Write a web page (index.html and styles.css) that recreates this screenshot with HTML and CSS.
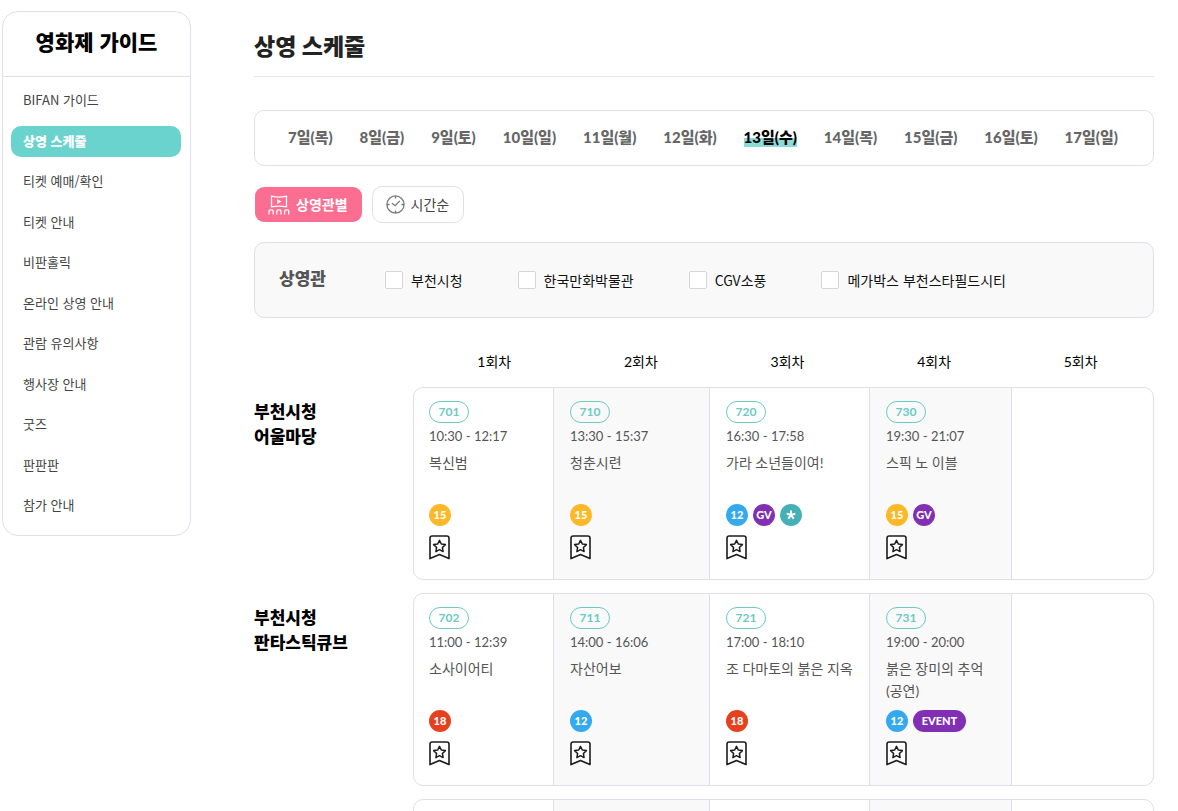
FILE: index.html
```html
<!DOCTYPE html>
<html lang="ko">
<head>
<meta charset="UTF-8">
<meta name="viewport" content="width=device-width, initial-scale=1.0">
<title>상영 스케줄</title>
<link rel="stylesheet" href="styles.css">
</head>
<body>
<svg class="sprite" aria-hidden="true">
  <symbol id="bookmark" viewBox="0 0 21 25">
    <path d="M1 23.6V3.2Q1 1 3.2 1h14.6Q20 1 20 3.2v20.4L10.500 19.600Z" fill="#fff" stroke="#1c1c1c" stroke-width="1.600" stroke-linejoin="round"/>
    <path d="M10.500 5.300l1.800 3.700 4.100.6-3 2.900.7 4.100-3.600-1.900-3.600 1.900.7-4.100-3-2.900 4.100-.6z" fill="none" stroke="#1c1c1c" stroke-width="1.500" stroke-linejoin="round"/>
  </symbol>
</svg>
<div class="page">
  <aside class="sidebar">
    <h2>영화제 가이드</h2>
    <ul>
      <li><a href="#">BIFAN 가이드</a></li>
      <li><a href="#" class="active">상영 스케줄</a></li>
      <li><a href="#">티켓 예매/확인</a></li>
      <li><a href="#">티켓 안내</a></li>
      <li><a href="#">비판홀릭</a></li>
      <li><a href="#">온라인 상영 안내</a></li>
      <li><a href="#">관람 유의사항</a></li>
      <li><a href="#">행사장 안내</a></li>
      <li><a href="#">굿즈</a></li>
      <li><a href="#">판판판</a></li>
      <li><a href="#">참가 안내</a></li>
    </ul>
  </aside>

  <main>
    <h1>상영 스케줄</h1>

    <nav class="dates">
      <a href="#">7일(목)</a>
      <a href="#">8일(금)</a>
      <a href="#">9일(토)</a>
      <a href="#">10일(일)</a>
      <a href="#">11일(월)</a>
      <a href="#">12일(화)</a>
      <a href="#" class="active">13일(수)</a>
      <a href="#">14일(목)</a>
      <a href="#">15일(금)</a>
      <a href="#">16일(토)</a>
      <a href="#">17일(일)</a>
    </nav>

    <div class="sort">
      <button type="button" class="on">
        <svg width="22" height="20" viewBox="0 0 22 20" fill="none" stroke="#fff" stroke-width="1.300">
          <path d="M3.500 1.200Q11 3 18.500 1.200V11.800Q11 10.300 3.500 11.800Z"/>
          <path d="M9.200 4v5l4.200-2.500z" fill="#fff" stroke="none"/>
          <path d="M1 19.500v-3.200a1.500 1.500 0 0 1 1.500-1.500h1.200a1.500 1.500 0 0 1 1.500 1.500V19.500M8.800 19.500v-3.200a1.500 1.500 0 0 1 1.500-1.500h1.200a1.500 1.500 0 0 1 1.500 1.500V19.500M16.600 19.500v-3.200a1.500 1.500 0 0 1 1.500-1.500h1.200a1.500 1.500 0 0 1 1.500 1.500V19.500"/>
        </svg>
        상영관별
      </button>
      <button type="button">
        <svg width="19" height="19" viewBox="0 0 19 19" fill="none" stroke="#777" stroke-width="1.300">
          <circle cx="9.500" cy="9.500" r="8.600"/>
          <path d="M9.500 1v2.500M9.500 15.500V18M1 9.500h2.500M15.500 9.500H18M6 8.300l3.200 2.400 4.600-4.800"/>
        </svg>
        시간순
      </button>
    </div>

    <div class="filter">
      <strong>상영관</strong>
      <div class="options">
        <label><input type="checkbox">부천시청</label>
        <label><input type="checkbox">한국만화박물관</label>
        <label><input type="checkbox">CGV소풍</label>
        <label><input type="checkbox">메가박스 부천스타필드시티</label>
      </div>
    </div>

    <ul class="rounds">
      <li>1회차</li>
      <li>2회차</li>
      <li>3회차</li>
      <li>4회차</li>
      <li>5회차</li>
    </ul>

    <section class="venue">
      <h3>부천시청<br>어울마당</h3>
      <table>
        <colgroup><col class="c1"><col class="c2"><col class="c3"><col class="c4"><col class="c5"></colgroup>
        <tr>
          <td>
            <span class="code">701</span>
            <p class="time">10:30 - 12:17</p>
            <p class="title">복신범</p>
            <div class="badges"><span class="b15">15</span></div>
            <button type="button" class="mark" aria-label="찜하기"><svg><use href="#bookmark"/></svg></button>
          </td>
          <td>
            <span class="code">710</span>
            <p class="time">13:30 - 15:37</p>
            <p class="title">청춘시련</p>
            <div class="badges"><span class="b15">15</span></div>
            <button type="button" class="mark" aria-label="찜하기"><svg><use href="#bookmark"/></svg></button>
          </td>
          <td>
            <span class="code">720</span>
            <p class="time">16:30 - 17:58</p>
            <p class="title">가라 소년들이여!</p>
            <div class="badges">
              <span class="b12">12</span>
              <span class="gv">GV</span>
              <span class="star"><svg width="10" height="10" viewBox="0 0 10 10" stroke="#fff" stroke-width="2"><path d="M5 5V.5M5 5l4.300-1.400M5 5l2.700 3.700M5 5L2.300 8.700M5 5L.7 3.600"/></svg></span>
            </div>
            <button type="button" class="mark" aria-label="찜하기"><svg><use href="#bookmark"/></svg></button>
          </td>
          <td>
            <span class="code">730</span>
            <p class="time">19:30 - 21:07</p>
            <p class="title">스픽 노 이블</p>
            <div class="badges"><span class="b15">15</span><span class="gv">GV</span></div>
            <button type="button" class="mark" aria-label="찜하기"><svg><use href="#bookmark"/></svg></button>
          </td>
          <td></td>
        </tr>
      </table>
    </section>

    <section class="venue">
      <h3>부천시청<br>판타스틱큐브</h3>
      <table>
        <colgroup><col class="c1"><col class="c2"><col class="c3"><col class="c4"><col class="c5"></colgroup>
        <tr>
          <td>
            <span class="code">702</span>
            <p class="time">11:00 - 12:39</p>
            <p class="title">소사이어티</p>
            <div class="badges"><span class="b18">18</span></div>
            <button type="button" class="mark" aria-label="찜하기"><svg><use href="#bookmark"/></svg></button>
          </td>
          <td>
            <span class="code">711</span>
            <p class="time">14:00 - 16:06</p>
            <p class="title">자산어보</p>
            <div class="badges"><span class="b12">12</span></div>
            <button type="button" class="mark" aria-label="찜하기"><svg><use href="#bookmark"/></svg></button>
          </td>
          <td>
            <span class="code">721</span>
            <p class="time">17:00 - 18:10</p>
            <p class="title">조 다마토의 붉은 지옥</p>
            <div class="badges"><span class="b18">18</span></div>
            <button type="button" class="mark" aria-label="찜하기"><svg><use href="#bookmark"/></svg></button>
          </td>
          <td>
            <span class="code">731</span>
            <p class="time">19:00 - 20:00</p>
            <p class="title">붉은 장미의 추억 (공연)</p>
            <div class="badges"><span class="b12">12</span><span class="event">EVENT</span></div>
            <button type="button" class="mark" aria-label="찜하기"><svg><use href="#bookmark"/></svg></button>
          </td>
          <td></td>
        </tr>
      </table>
    </section>

    <section class="venue">
      <h3></h3>
      <table>
        <colgroup><col class="c1"><col class="c2"><col class="c3"><col class="c4"><col class="c5"></colgroup>
        <tr><td></td><td></td><td></td><td></td><td></td></tr>
      </table>
    </section>
  </main>
</div>
</body>
</html>
```
FILE: styles.css
```css
* {
  box-sizing: border-box;
}

body {
  margin: 0;
  background: #fff;
  color: #111;
  font-family: Lato, "Noto Sans CJK KR", sans-serif;
  font-size: 14px;
  line-height: 22px;
  word-break: keep-all;
}

h1, h2, h3, p, ul {
  margin: 0;
  padding: 0;
}

ul {
  list-style: none;
}

a {
  color: inherit;
  text-decoration: none;
}

button {
  font: inherit;
  cursor: pointer;
}

.sprite {
  display: none;
}

.page {
  display: flex;
  align-items: flex-start;
  gap: 63px;
  padding: 11px 24px 0 2px;
}

/* sidebar */
.sidebar {
  flex: 0 0 189px;
  border: 1px solid #dfe0ea;
  border-radius: 16px;
  font-family: "Noto Sans CJK KR", sans-serif;
}

.sidebar h2 {
  padding: 14px 0 19px;
  border-bottom: 1px solid #dfe0ea;
  color: #000;
  font-size: 21px;
  font-weight: 900;
  line-height: 31px;
  text-align: center;
}

.sidebar ul {
  display: flex;
  flex-direction: column;
  justify-content: space-between;
  min-height: 436px;
  margin: 8px 9px 14px 8px;
}

.sidebar a {
  display: block;
  padding: 0 12px 2px;
  border-radius: 10px;
  color: #444;
  font-size: 13px;
  line-height: 29px;
}

.sidebar a.active {
  background: #6bd3ce;
  color: #fff;
  font-weight: 900;
}

/* content */
main {
  flex: 1;
  min-width: 0;
}

h1 {
  padding: 18px 0 13px;
  border-bottom: 1px solid #e5e5ec;
  color: #222;
  font-size: 23px;
  font-weight: 900;
  line-height: 34px;
}

.dates {
  display: flex;
  justify-content: space-between;
  margin-top: 33px;
  padding: 16px 35px 18px 33px;
  border: 1px solid #dfe0e8;
  border-radius: 10px;
  color: #666;
  font-size: 15px;
  font-weight: 900;
  line-height: 20px;
}

.dates a.active {
  background: linear-gradient(transparent 55%, #8adcd8 55%);
  color: #000;
}

.sort {
  display: flex;
  gap: 9px;
  margin-top: 20px;
}

.sort button {
  display: flex;
  align-items: center;
  gap: 6px;
  height: 37px;
  padding: 0 14px 0 13px;
  border: 1px solid #dfe0ea;
  border-radius: 10px;
  background: #fff;
  color: #444;
}

.sort button.on {
  border-color: transparent;
  background: #fb6e92;
  background-clip: padding-box;
  color: #fff;
  font-weight: 700;
}

.filter {
  display: flex;
  align-items: center;
  margin-top: 19px;
  padding: 26px 24px;
  border: 1px solid #dfe0e8;
  border-radius: 10px;
  background: #f9f9fa;
  font-family: "Noto Sans CJK KR", sans-serif;
}

.filter strong {
  flex: 0 0 106px;
  padding-bottom: 4px;
  color: #555;
  font-size: 17px;
  font-weight: 900;
  line-height: 18px;
}

.options {
  display: flex;
  flex-wrap: wrap;
  gap: 55px;
}

.options label {
  display: flex;
  align-items: center;
  gap: 8px;
}

.options input {
  appearance: none;
  width: 18px;
  height: 18px;
  margin: 0;
  border: 1px solid #d5d5da;
  border-radius: 2px;
  background: #fff;
}

.options input:checked {
  background: #6bd3ce;
}

/* timetable */
.rounds {
  display: grid;
  grid-template-columns: repeat(5, 1fr);
  margin: 33px 0 14px 167px;
  color: #000;
  text-align: center;
}

.venue {
  display: flex;
  margin-bottom: 13px;
}

.venue h3 {
  flex: 0 0 159px;
  padding-top: 12px;
  color: #000;
  font-size: 17px;
  font-weight: 900;
  line-height: 25px;
}

.venue table {
  flex: 1;
  width: 100%;
  table-layout: fixed;
  border: 1px solid #dde0ea;
  border-radius: 10px;
  border-spacing: 0;
}

.c1 { width: 139px; }
.c2 { width: 156px; }
.c3 { width: 160px; }
.c4 { width: 142px; }
.c5 { width: 142px; }

.venue td {
  height: 191px;
  padding: 13px 8px 19px 15px;
  color: #555;
  vertical-align: top;
}

.venue td + td {
  padding-left: 16px;
  border-left: 1px solid #dde0ea;
}

.venue td:nth-child(even) {
  background: #f9f9fa;
}

.code {
  display: block;
  width: 40px;
  border: 1px solid #6cc9c3;
  border-radius: 11px;
  color: #6cc9c3;
  font-size: 12px;
  font-weight: 700;
  line-height: 20px;
  text-align: center;
}

.time {
  margin-top: 2px;
  font-size: 13px;
}

.title {
  min-height: 44px;
  margin-top: 5px;
}

.badges {
  display: flex;
  gap: 5px;
  margin-top: 8px;
}

.badges span {
  display: flex;
  align-items: center;
  justify-content: center;
  width: 22px;
  height: 22px;
  border-radius: 11px;
  color: #fff;
  font-size: 11px;
  font-weight: 900;
}

.badges .b12 { background: #35a9ef; }
.badges .b15 { background: #fdb827; }
.badges .b18 { background: #e5411f; }
.badges .gv { background: #812fb3; }
.badges .star { background: #46b0b7; }

.badges .event {
  width: 53px;
  background: #812fb3;
}

.mark {
  display: block;
  margin-top: 9px;
  padding: 0;
  border: 0;
  background: none;
}

.mark svg {
  display: block;
  width: 21px;
  height: 25px;
}
```
